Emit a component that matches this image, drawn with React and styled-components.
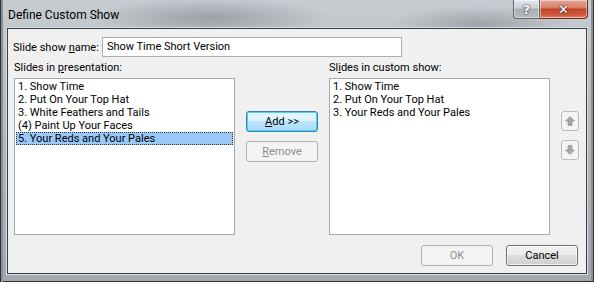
import React from "react";
import styled, { createGlobalStyle } from "styled-components";

const Global = createGlobalStyle`
  html, body { margin: 0; padding: 0; background: #9ea3a8; }
  * { box-sizing: border-box; }
`;

const FONT = `Roboto, "Noto Sans", sans-serif`;

const Frame = styled.div`
  width: 594px;
  height: 282px;
  display: flex;
  flex-direction: column;
  padding: 0 7px 8px 7px;
  font-family: ${FONT};
  font-size: 11px;
  color: #000;
  background:
    radial-gradient(ellipse 120px 20px at 210px 18px, rgba(80,86,92,0.35), transparent),
    radial-gradient(ellipse 90px 18px at 480px 24px, rgba(90,96,102,0.35), transparent),
    linear-gradient(to bottom, #c7ccd1 0%, #b6bbc0 40%, #a3a8ae 100%);
  box-shadow: inset 1px 0 0 #2e3236, inset 3px 0 0 #8b9095, inset -1px 0 0 #2e3236, inset 0 -1px 0 #2e3236, inset -3px 0 0 #8b9095;
`;

const TitleBar = styled.div`
  height: 28px;
  display: flex;
  align-items: flex-start;
  justify-content: space-between;
`;

const Title = styled.div`
  padding: 7px 0 0 1px;
  font-size: 12px;
  line-height: 16px;
  color: #000;
`;

const Caption = styled.div`
  display: flex;
  margin-right: -1px;
`;

const CapButton = styled.div`
  height: 19px;
  width: ${(p) => p.$w}px;
  display: flex;
  align-items: center;
  justify-content: center;
  border: 1px solid ${(p) => (p.$red ? "#6a2a22" : "#62676c")};
  border-top: none;
  border-left: ${(p) => (p.$red ? "none" : "1px solid #62676c")};
  border-radius: ${(p) => (p.$red ? "0 0 4px 0" : "0 0 0 4px")};
  background: ${(p) =>
    p.$red
      ? "linear-gradient(to bottom, #e5a697 0%, #d67d68 45%, #c14124 50%, #cf5a3f 85%, #e88a70 100%)"
      : "linear-gradient(to bottom, #e4e7ea 0%, #c9ced2 45%, #a9afb5 50%, #b5bbc1 100%)"};
  box-shadow: inset 0 0 0 1px rgba(255,255,255,0.45);
  color: #fff;
  font-weight: bold;
  font-family: "DejaVu Sans", sans-serif;
  font-size: 13px;
  text-shadow: 0 0 2px #333, 0 0 1px #222;
`;

const Client = styled.div`
  flex: 1;
  background: #f0f0f0;
  border: 1px solid #3a3f45;
  box-shadow: 0 0 0 1px #d8dce0;
  display: flex;
  flex-direction: column;
  padding: 8px 8px 7px 5px;
`;

const NameRow = styled.div`
  display: flex;
  align-items: center;
  gap: 3px;
  height: 20px;
`;

const Label = styled.div`
  line-height: 15px;
  white-space: nowrap;
`;

const TextBox = styled.div`
  width: 300px;
  height: 20px;
  border: 1px solid #abadb3;
  background: #fff;
  padding: 0 4px;
  line-height: 18px;
`;

const Main = styled.div`
  margin-top: 3px;
  display: grid;
  grid-template-columns: 221px 72px 221px 18px;
  column-gap: 11px;
  padding-left: 1px;
`;

const Col = styled.div`
  display: flex;
  flex-direction: column;
  gap: 3px;
`;

const ListBox = styled.div`
  height: 157px;
  border: 1px solid #a9a9a9;
  background: #fff;
  padding: 1px;
`;

const Item = styled.div`
  height: 13px;
  line-height: 13px;
  padding-left: 2px;
  white-space: nowrap;
  background: ${(p) => (p.$sel ? "#99c9f9" : "transparent")};
  outline: ${(p) => (p.$sel ? "1px dotted #333" : "none")};
  outline-offset: -1px;
`;

const Stack = styled.div`
  display: flex;
  flex-direction: column;
  gap: 9px;
  padding-top: ${(p) => p.$pt}px;
`;

const Button = styled.div`
  width: ${(p) => p.$w || 72}px;
  height: 21px;
  border-radius: 3px;
  display: flex;
  align-items: center;
  justify-content: center;
  border: 1px solid
    ${(p) => (p.$focus ? "#3c7fb1" : p.$disabled ? "#adb2b5" : "#707070")};
  color: ${(p) => (p.$disabled ? "#8d8d8d" : "#000")};
  background: ${(p) =>
    p.$focus
      ? "linear-gradient(to bottom, #eaf6fd 0%, #d9f0fc 50%, #bee6fd 50%, #a7d9f5 100%)"
      : p.$disabled
      ? "#f4f4f4"
      : "linear-gradient(to bottom, #f2f2f2 0%, #ebebeb 50%, #dddddd 50%, #cfcfcf 100%)"};
  box-shadow: ${(p) =>
    p.$focus
      ? "inset 0 0 0 1px #48d3f4"
      : p.$disabled
      ? "none"
      : "inset 0 0 0 1px rgba(255,255,255,0.7)"};
`;

const ArrowButton = styled.div`
  width: 18px;
  height: 20px;
  border: 1px solid #bcbcbc;
  border-radius: 3px;
  background: #f4f4f4;
  display: flex;
  align-items: center;
  justify-content: center;
`;

const Footer = styled.div`
  margin-top: auto;
  display: flex;
  justify-content: flex-end;
  gap: 13px;
`;

const Arrow = ({ down }) => (
  <svg width="10" height="10" viewBox="0 0 10 10" style={{ transform: down ? "rotate(180deg)" : "none" }}>
    <path d="M5 0.5 L9.5 5 L7 5 L7 9.5 L3 9.5 L3 5 L0.5 5 Z" fill="#a6a6a6" stroke="#8e8e8e" strokeWidth="0.6" />
  </svg>
);

const leftItems = [
  "1. Show Time",
  "2. Put On Your Top Hat",
  "3. White Feathers and Tails",
  "(4) Paint Up Your Faces",
  "5. Your Reds and Your Pales",
];
const rightItems = ["1. Show Time", "2. Put On Your Top Hat", "3. Your Reds and Your Pales"];

export default function App() {
  return (
    <>
      <Global />
      <Frame>
        <TitleBar>
          <Title>Define Custom Show</Title>
          <Caption>
            <CapButton $w={27}>?</CapButton>
            <CapButton $w={48} $red>✕</CapButton>
          </Caption>
        </TitleBar>
        <Client>
          <NameRow>
            <Label>
              Slide show <u>n</u>ame:
            </Label>
            <TextBox>Show Time Short Version</TextBox>
          </NameRow>
          <Main>
            <Col>
              <Label>
                Slides in <u>p</u>resentation:
              </Label>
              <ListBox>
                {leftItems.map((t, i) => (
                  <Item key={t} $sel={i === 4}>
                    {t}
                  </Item>
                ))}
              </ListBox>
            </Col>
            <Stack $pt={51}>
              <Button $focus>
                <span>
                  <u>A</u>dd &gt;&gt;
                </span>
              </Button>
              <Button $disabled>
                <span>
                  <u>R</u>emove
                </span>
              </Button>
            </Stack>
            <Col>
              <Label>
                Sl<u>i</u>des in custom show:
              </Label>
              <ListBox>
                {rightItems.map((t) => (
                  <Item key={t}>{t}</Item>
                ))}
              </ListBox>
            </Col>
            <Stack $pt={51}>
              <ArrowButton>
                <Arrow />
              </ArrowButton>
              <ArrowButton>
                <Arrow down />
              </ArrowButton>
            </Stack>
          </Main>
          <Footer>
            <Button $disabled>OK</Button>
            <Button>Cancel</Button>
          </Footer>
        </Client>
      </Frame>
    </>
  );
}
